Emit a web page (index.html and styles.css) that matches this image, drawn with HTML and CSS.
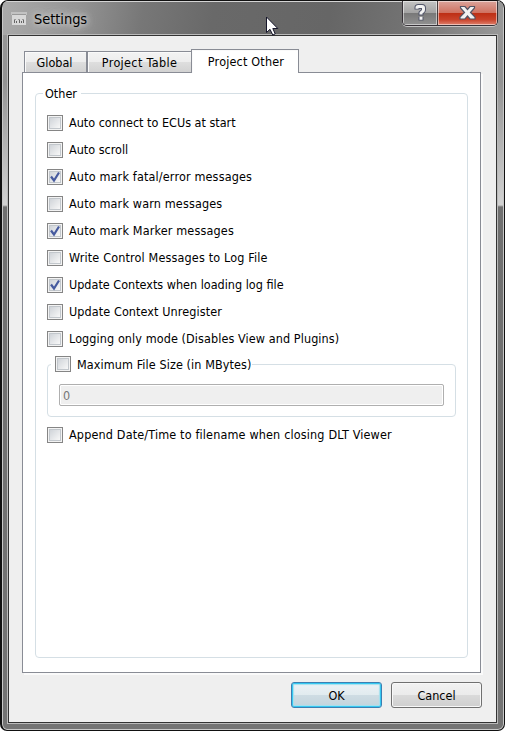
FILE: index.html
```html
<!DOCTYPE html>
<html lang="en">
<head>
<meta charset="utf-8">
<title>Settings</title>
<link rel="stylesheet" href="styles.css">
</head>
<body>
<div class="window">
  <header class="titlebar">
    <svg class="app-icon" width="17" height="16" viewBox="0 0 17 16">
      <path d="M0 1H16V4H0Z" fill="#c2c2c2"/>
      <path d="M1 4H15V14H1Z" fill="#d8d8d8"/>
      <path d="M1 3.5H15" stroke="#999"/>
      <path d="M3 8.5H5M7 8.5H9M11 8.5H13" stroke="#999" fill="none"/>
      <path d="M3.5 9V12M5.5 10V12M8.5 9V12M10.5 10V12M12.5 9V12" stroke="#666" fill="none"/>
    </svg>
    <h1>Settings</h1>
    <div class="controls">
      <span class="control help"><svg width="34" height="23" viewBox="0 0 34 23"><path d="M14 8.5V6.5Q14 5.5 15.5 5.5H19Q20.5 5.5 20.5 7V9Q20.5 10 19 11L18 12V14.5M18 16V19.5" fill="none" stroke="#52566a" stroke-width="5"/><path d="M14 7.8V6.5Q14 5.5 15.3 5.5H19Q20.5 5.5 20.5 7V9Q20.5 10 19 11L18 12V13.5M18 15.8V18.7" fill="none" stroke="#f2f2f2" stroke-width="3"/></svg></span>
      <span class="control close"><svg width="58" height="23" viewBox="0 0 58 23"><path d="M22.5 5.5H27L29.5 8.5L32 5.5H36.5V7L32.5 11.5L37 16V18H32L29.5 15L27 18H22V16L26.5 11.5L22.5 7Z" fill="#f1f1f1" stroke="#535464" stroke-width="1.2"/></svg></span>
    </div>
  </header>
  <main class="client">
    <nav class="tabs">
      <span class="tab global">Global</span>
      <span class="tab table">Project Table</span>
      <span class="tab active">Project Other</span>
    </nav>
    <section class="pane">
      <div class="group">
        <span class="legend">Other</span>
        <div class="options">
          <label class="option"><i class="box"></i><span>Auto connect to ECUs at start</span></label>
          <label class="option"><i class="box"></i><span>Auto scroll</span></label>
          <label class="option wide"><i class="box"><svg viewBox="0 0 16 16"><path d="M4 7.5L7 11.5L12 3.5" /></svg></i><span>Auto mark fatal/error messages</span></label>
          <label class="option wide"><i class="box"></i><span>Auto mark warn messages</span></label>
          <label class="option wide"><i class="box"><svg viewBox="0 0 16 16"><path d="M4 7.5L7 11.5L12 3.5" /></svg></i><span>Auto mark Marker messages</span></label>
          <label class="option wide"><i class="box"></i><span>Write Control Messages to Log File</span></label>
          <label class="option"><i class="box"><svg viewBox="0 0 16 16"><path d="M4 7.5L7 11.5L12 3.5" /></svg></i><span>Update Contexts when loading log file</span></label>
          <label class="option medium"><i class="box"></i><span>Update Context Unregister</span></label>
          <label class="option medium"><i class="box"></i><span>Logging only mode (Disables View and Plugins)</span></label>
        </div>
        <div class="size-group">
          <label class="option size-title medium"><i class="box"></i><span>Maximum File Size (in MBytes)</span></label>
          <div class="field">0</div>
        </div>
        <label class="option wide"><i class="box"></i><span>Append Date/Time to filename when closing DLT Viewer</span></label>
      </div>
    </section>
    <footer class="actions">
      <button class="button primary">OK</button>
      <button class="button">Cancel</button>
    </footer>
  </main>
  <svg class="cursor" width="14" height="20" viewBox="0 0 14 20"><path d="M1.5 1V16.5L5 13.3L7.8 19L10.2 17.9L7.8 12.5H12.8Z" fill="#fff" stroke="#15152a"/></svg>
</div>
</body>
</html>
```
FILE: styles.css
```css
* { box-sizing: border-box; }
html { background: #fff; }
body {
  margin: 0;
  color: #000;
  font: 12.5px/16px "DejaVu Sans Condensed", "DejaVu Sans", sans-serif;
  font-stretch: condensed;
}
.window {
  position: relative;
  width: 505px;
  height: 731px;
  padding: 0 7px 7px 6px;
  border: 1px solid #111;
  border-left-width: 2px;
  border-radius: 8px 8px 7px 7px;
  background: linear-gradient(#999 0, #939393 80px, #d2d2d2 204px, #707070 206px, #747474 100%);
  box-shadow: inset 0 0 0 1px #c8c8c8;
  overflow: hidden;
}
.titlebar {
  display: flex;
  height: 34px;
  margin: 0 -6px 0 -5px;
  padding-left: 5px;
  border-top: 1px solid #d4d4d4;
  background: linear-gradient(100deg, #aaa 0, #949494 15%, #777 28%, #696969 42%, #666 65%, #747474 82%, #999 100%);
}
.app-icon { margin: 9px 6px 0 3px; }
h1 {
  margin: 7px 0 0;
  font: 14.5px/20px "DejaVu Sans Condensed", sans-serif;
  font-stretch: condensed;
  letter-spacing: -.05px;
  text-shadow: 0 0 7px #ddd, 0 0 12px #ccc, 0 0 5px #bbb;
}
.controls {
  display: flex;
  width: 96px;
  height: 25px;
  margin: -1px 5px 0 auto;
  border: 1px solid #373238;
  border-top: 0;
  border-radius: 0 0 5px 5px;
  box-shadow: 0 1px 0 #c4c4c4;
  overflow: hidden;
}
.control { height: 24px; box-shadow: inset 0 0 0 1px #ffffff80; }
.help { width: 35px; border-right: 1px solid #453b3b; background: linear-gradient(#c4c4c4, #a2a2a2 50%, #787878 51%, #919191); }
.close { flex: 1; background: linear-gradient(#dba49b, #cf7160 50%, #bd2e14 51%, #c9432b 78%, #df826e); }
.client {
  height: 688px;
  padding: 13px 14px 0 13px;
  border: 1px solid #333;
  background: #efefef;
  box-shadow: 0 0 0 1px #bababa;
}
.tabs { display: flex; align-items: flex-end; height: 23px; padding-left: 2px; }
.tab {
  height: 21px;
  padding-top: 3px;
  border: 1px solid #898c95;
  border-bottom: 0;
  background: linear-gradient(#f3f3f3, #ededed 49%, #dedede 51%, #d2d2d2);
  box-shadow: inset 1px 1px #fafafa;
  text-align: center;
}
.global { width: 63px; padding-right: 2px; }
.table { width: 105px; letter-spacing: .35px; }
.tab.active { position: relative; width: 108px; height: 24px; margin: 0 0 -1px -1px; padding: 4px 0 0 2px; background: #fff; letter-spacing: .18px; }
.pane { width: 459px; height: 601px; padding: 20px 12px 0; border: 1px solid #898c95; background: #fff; box-shadow: 2px 2px #fafafa; }
.group { height: 565px; padding: 0 11px; border: 1px solid #d5dfe5; border-radius: 4px; }
.legend { display: block; width: 38px; height: 16px; margin: -8px 0 0 -4px; padding-left: 2px; background: #fff; }
.options { margin-top: 7px; }
.option { display: flex; align-items: center; height: 27px; white-space: nowrap; }
.option > span { margin-left: 6px; padding-top: 1px; }
.medium { letter-spacing: .09px; }
.wide { letter-spacing: .155px; }
.box {
  width: 16px;
  height: 16px;
  flex: none;
  border: 1px solid #858585;
  background: linear-gradient(135deg, #d0d4d9, #f8f8f8) content-box, #f5f5f5;
  padding: 2px;
  box-shadow: inset 0 0 0 1px #f3f3f3, inset 0 0 0 2px #c2c7cc;
}
.box svg { display: block; width: 16px; height: 16px; margin: -3px; }
.box path { fill: none; stroke: #475b9f; stroke-width: 2.2; }
.size-group { width: 409px; height: 53px; margin: 12px 0 4px; padding: 0 11px; border: 1px solid #d5dfe5; border-radius: 4px; }
.size-title { width: 201px; height: 16px; margin: -9px 0 12px -8px; padding-left: 4px; background: #fff; }
.field { width: 385px; height: 22px; padding: 3px 3px; border: 1px solid #afafaf; border-radius: 2px; background: #efefef; box-shadow: inset 0 0 0 1px #fff; color: #777; }
.actions { display: flex; justify-content: flex-end; gap: 9px; padding-top: 9px; }
.button {
  width: 91px;
  height: 26px;
  padding: 1px 0 0;
  border: 1px solid #707070;
  border-radius: 3px;
  background: linear-gradient(#f2f2f2, #ebebeb 49%, #dadada 51%, #cfcfcf);
  box-shadow: inset 0 0 0 1px #f8f8f8;
  color: #000;
  font: inherit;
}
.primary { border-color: #3c7fb1; background: linear-gradient(#edf2f5, #e1ebef 49%, #cedce3 51%, #c3d4dc); box-shadow: inset 0 0 0 1px #35c8f2, inset 0 0 1px 2px #a5e0ee; }
.cursor { position: absolute; left: 263px; top: 15px; }
```
